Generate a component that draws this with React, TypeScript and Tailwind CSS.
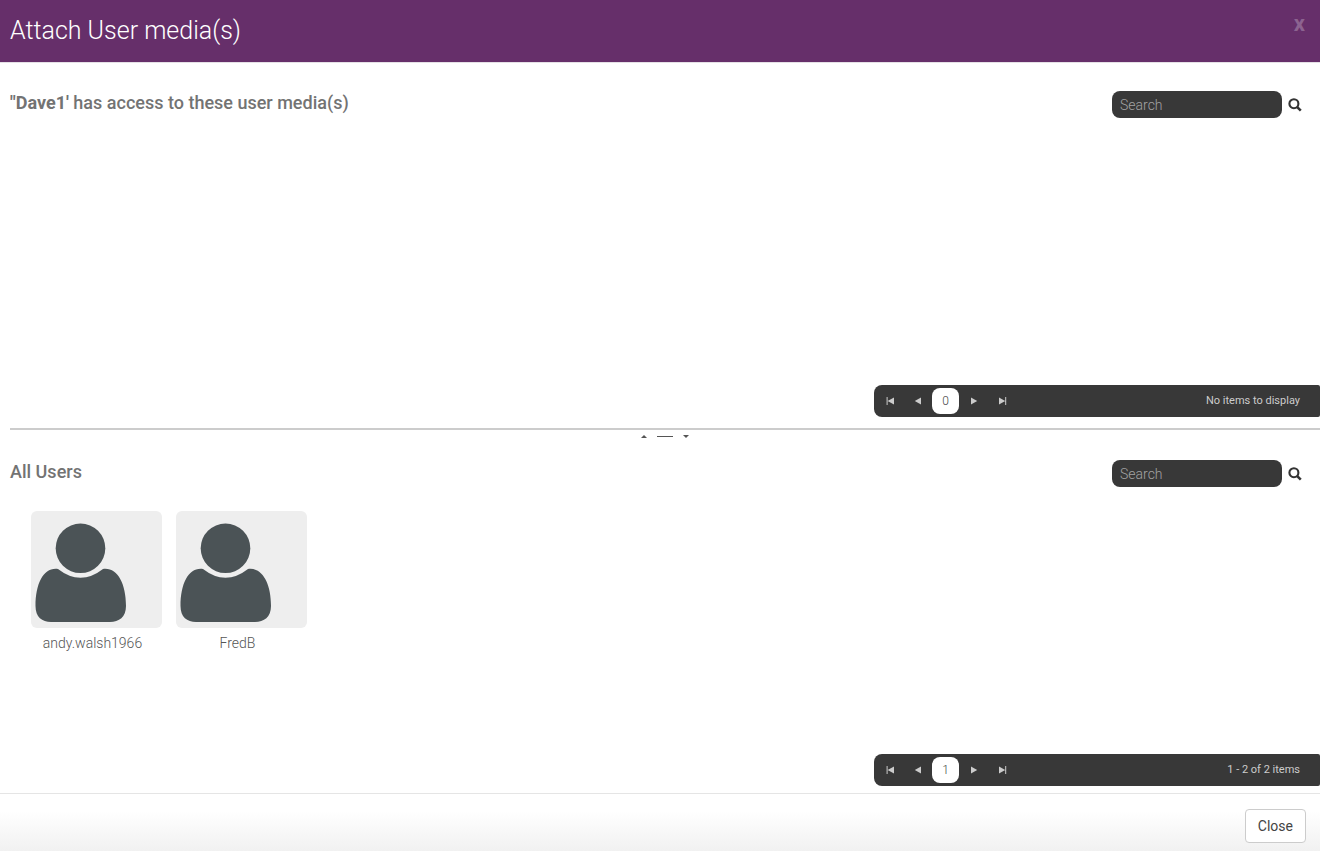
import type { ReactNode } from 'react'

interface User {
  name: string
}

const users: User[] = [{ name: 'andy.walsh1966' }, { name: 'FredB' }]

function SearchBox(props: { label: string }) {
  return (
    <form className="flex items-center gap-1" onSubmit={(e) => e.preventDefault()}>
      <input
        type="text"
        aria-label={props.label}
        placeholder="Search"
        className="h-[27px] w-[170px] rounded-lg bg-[#383838] px-2 text-sm font-light text-white outline-none placeholder:text-[#a3a3a3]"
      />
      <button type="submit" aria-label="Submit search" className="flex h-6 w-[18px] items-center justify-center">
        <svg viewBox="0 0 14 14" className="size-[14px]" fill="none" stroke="#333333">
          <circle cx="5.9" cy="5.7" r="4.5" strokeWidth="2.1" />
          <path d="M9 8.8L12.8 12.6" strokeWidth="2.6" />
        </svg>
      </button>
    </form>
  )
}

function PagerButton(props: { label: string; children: ReactNode }) {
  return (
    <button type="button" aria-label={props.label} className="flex h-8 w-7 items-center justify-center">
      <svg viewBox="0 0 8 8" className="size-2 overflow-visible" fill="#cccccc">
        {props.children}
      </svg>
    </button>
  )
}

function Pager(props: { page: number; status: string }) {
  return (
    <nav
      aria-label="Pages"
      className="flex h-8 w-full max-w-[446px] items-center self-end rounded-l-lg rounded-r-xs bg-[#383838] pr-5 pl-0.5"
    >
      <PagerButton label="First page">
        <path d="M0.6 0H1.6V8H0.6ZM8 0.4V7.6L1.6 4Z" />
      </PagerButton>
      <PagerButton label="Previous page">
        <path d="M7 0.4V7.6L0.8 4Z" />
      </PagerButton>
      <button
        type="button"
        aria-current="page"
        className="mr-px h-[26px] w-[27px] rounded-lg bg-white text-xs font-light text-[#444444]"
      >
        {props.page}
      </button>
      <PagerButton label="Next page">
        <path d="M1 0.4V7.6L7.2 4Z" />
      </PagerButton>
      <PagerButton label="Last page">
        <path d="M1 0.4V7.6L7.2 4ZM7.2 0H8.2V8H7.2Z" />
      </PagerButton>
      <span className="ml-auto text-[11px] text-[#cccccc]">{props.status}</span>
    </nav>
  )
}

function UserCard(props: { user: User }) {
  return (
    <li className="flex w-[131px] flex-col gap-[5px]">
      <div className="h-[117px] w-full rounded-md bg-[#eeeeee]">
        <svg viewBox="0 0 131 117" className="h-full w-full" fill="#4b5356">
          <circle cx="49.5" cy="37.3" r="24.8" />
          <path d="M27 58Q49.5 75.5 72 58C86 56 95 72 95 95C95 106 88 111 79 111H20C11 111 4.5 106 4.5 95C4.5 72 13 56 27 58Z" />
        </svg>
      </div>
      <span className="pr-2 text-center text-sm leading-5 font-light text-[#555555]">{props.user.name}</span>
    </li>
  )
}

interface MediaPanelProps {
  searchLabel: string
  title: ReactNode
  page: number
  status: string
  children?: ReactNode
}
function MediaPanel(props: MediaPanelProps) {
  return (
    <section className="flex flex-col">
      <div className="flex items-start justify-between pr-4 pl-2.5">
        <h2 className="text-lg leading-6 font-medium text-[#737373]">{props.title}</h2>
        <SearchBox label={props.searchLabel} />
      </div>
      <div className="min-h-[267px] pt-6 pl-[31px]">{props.children}</div>
      <Pager page={props.page} status={props.status} />
    </section>
  )
}

function Splitter() {
  return (
    <div className="mt-[11px] ml-2.5 flex h-[14px] items-center justify-center gap-2.5 border-t-2 border-[#cccccc]">
      <svg viewBox="0 0 6 3" className="h-[3px] w-[6px]" fill="#555555">
        <path d="M0 3L3 0L6 3Z" />
      </svg>
      <div className="h-px w-4 bg-[#555555]" />
      <svg viewBox="0 0 6 3" className="h-[3px] w-[6px]" fill="#555555">
        <path d="M0 0L3 3L6 0Z" />
      </svg>
    </div>
  )
}

export default function App() {
  return (
    <div className="flex min-h-screen flex-col bg-white font-['Roboto',sans-serif]">
      <header className="flex items-start justify-between border-b border-[#e5e0e6] bg-[#662f6a] px-2.5 py-3">
        <h1 className="text-[25px] leading-[38px] font-light text-white">Attach User media(s)</h1>
        <button type="button" aria-label="Close dialog" className="px-[5px] text-[22px] leading-6 font-bold text-[#8c6390]">
          x
        </button>
      </header>
      <main className="flex flex-col pt-7">
        <MediaPanel
          searchLabel="Search attached media"
          title={
            <>
              <strong className="font-bold">"Dave1'</strong> has access to these user media(s)
            </>
          }
          page={0}
          status="No items to display"
        />
        <Splitter />
        <div className="pt-[18px]">
          <MediaPanel searchLabel="Search all users" title="All Users" page={1} status="1 - 2 of 2 items">
            <ul className="flex flex-wrap gap-3.5">
              {users.map((user) => (
                <UserCard key={user.name} user={user} />
              ))}
            </ul>
          </MediaPanel>
        </div>
      </main>
      <footer className="mt-[7px] flex grow items-start justify-end border-t border-[#e5e5e5] bg-linear-to-b from-white from-30% to-[#f1f1f1] px-3.5 pt-[15px] pb-2">
        <button
          type="button"
          className="h-[34px] rounded-sm border border-[#cccccc] bg-white px-3 text-sm text-[#444444]"
        >
          Close
        </button>
      </footer>
    </div>
  )
}
